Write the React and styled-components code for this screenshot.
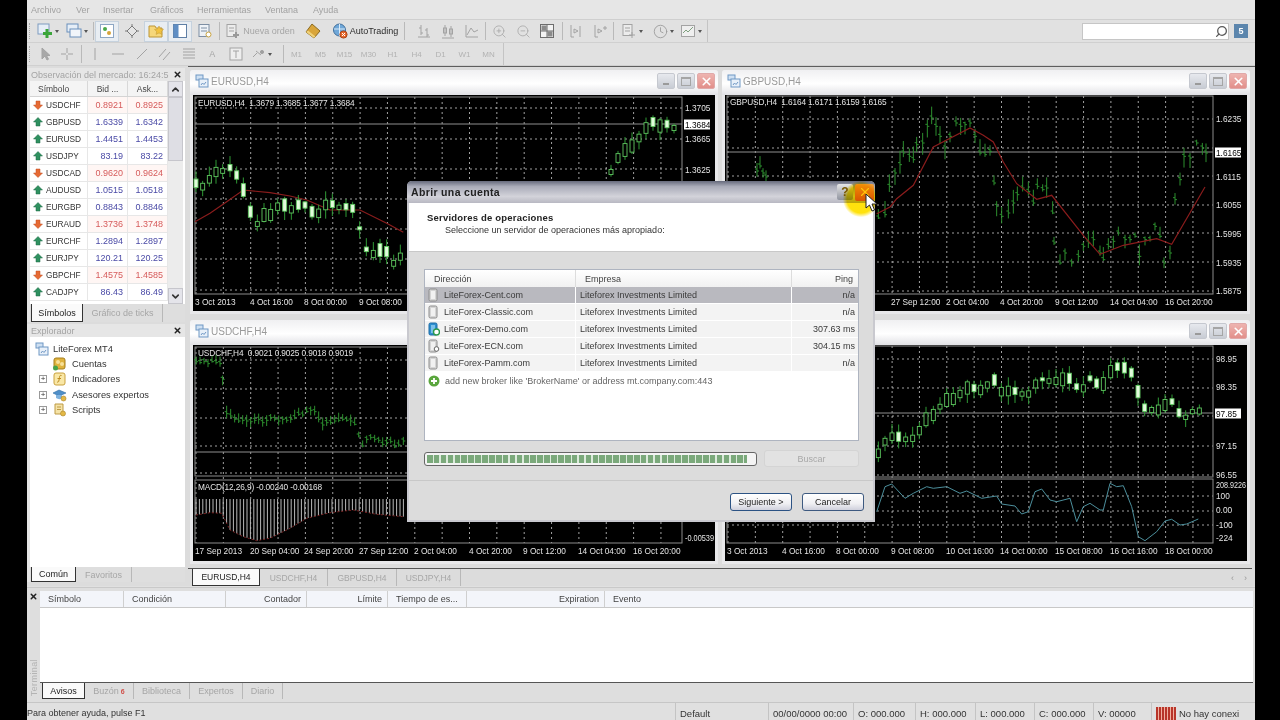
import React from "react";
import styled, { createGlobalStyle } from "styled-components";
import { Search, ZoomIn, ZoomOut, Clock, ChevronUp, ChevronDown, X } from "lucide-react";

const FONT = `"Liberation Sans", Arial, sans-serif`;

// little pseudo random so the candles stay the same on each render
const noise = (i) => {
  const n = Math.sin(i * 12.9898) * 43758.5453;
  return n - Math.floor(n);
};
const fromZoom = (ox, oy, pts) => pts.map(([x, y]) => [ox + x / 3, oy + y / 3]);
const toLine = (pts) => pts.map(([x, y]) => `${x.toFixed(1)},${y.toFixed(1)}`).join(" ");

const EUR_CANDLES = [
  ...fromZoom(190, 70, [[18,340],[38,350],[58,328],[78,306],[98,303],[120,293],[140,315],[160,360],[181,425],[202,462],[222,435],[242,435],[263,410],[284,405],[304,418],[325,404],[345,405],[366,425],[386,430],[407,405],[427,402],[447,412],[468,410],[488,415],[509,475],[529,538],[550,552],[570,540],[590,545],[611,580],[631,560]]),
  [611,172],[618,158],[625,150],[632,146],[639,138],[646,128],[653,122],[660,126],[667,124],[674,128],
];
const EUR_MA = fromZoom(190, 70, [[15,455],[60,430],[110,395],[160,360],[240,368],[300,378],[350,390],[420,420],[510,420],[590,460],[640,487]]);

const GBP_BARS = [
  [757,170],[760,165],[763,172],[766,176],
  ...fromZoom(870, 92, [[25,375],[45,365],[58,280],[75,240],[90,215],[100,180],[118,190],[130,200],[140,155],[158,150],[172,100],[185,75],[198,100],[210,130],[225,165],[240,130],[258,90],[272,100],[285,95],[300,90],[315,130],[330,180],[345,185],[360,175],[372,270],[380,340],[395,370],[415,360],[430,330],[442,305],[458,285],[475,295],[490,330],[502,280],[518,290],[530,285],[548,360],[552,450],[570,510],[585,480],[605,510],[625,490],[640,460],[655,450],[670,440],[690,480],[700,500],[715,460],[730,445],[745,420],[765,440],[780,440],[795,430],[808,490],[825,440],[840,440],[855,400],[870,430],[882,510],[900,480],[915,320],[930,260],[942,190],[960,195],[980,150],[997,165],[1008,180]]),
];
const GBP_MA = fromZoom(870, 92, [[20,365],[60,345],[80,320],[130,280],[190,165],[300,108],[340,130],[370,150],[400,210],[440,275],[500,322],[545,310],[640,430],[690,487],[760,460],[860,440],[905,457],[1005,285]]);

const CHF_BARS = fromZoom(190, 320, [[18,122],[30,125],[42,122],[54,128],[66,122],[78,125],[90,128],[98,175],[110,278],[122,285],[134,295],[146,300],[158,298],[170,300],[182,302],[194,298],[206,295],[218,305],[230,298],[242,290],[254,295],[266,300],[278,295],[290,298],[302,295],[314,290],[326,280],[338,282],[350,272],[362,268],[374,272],[386,295],[398,312],[410,305],[422,305],[434,300],[446,298],[458,295],[470,298],[482,300],[494,310],[506,345],[518,375],[530,355],[542,350],[554,355],[566,358],[578,370],[590,365],[602,362],[614,378],[626,372],[640,360]]);
const MACD_LOW = [[18,585],[60,578],[95,580],[120,630],[160,650],[200,662],[240,655],[300,625],[350,595],[420,578],[490,570],[560,583],[640,590]];

const JPY_CANDLES = fromZoom(870, 320, [[25,400],[45,365],[66,350],[86,350],[107,358],[128,355],[148,332],[168,298],[190,285],[210,260],[230,240],[250,237],[270,222],[292,204],[312,204],[332,210],[352,195],[373,180],[394,215],[415,213],[435,213],[456,222],[476,222],[497,192],[517,178],[537,183],[558,183],[578,178],[598,175],[620,200],[640,205],[660,175],[680,190],[700,192],[722,155],[742,140],[763,143],[784,158],[804,215],[824,263],[845,270],[865,270],[885,255],[906,245],[927,278],[947,292],[967,275],[988,273]]);
const JPY_CCI = fromZoom(870, 320, [[20,575],[45,500],[65,492],[105,535],[130,520],[170,500],[190,505],[230,500],[270,520],[290,513],[335,535],[380,528],[395,552],[435,558],[455,582],[475,575],[495,515],[515,507],[540,540],[560,545],[600,535],[620,605],[640,560],[660,550],[690,570],[700,570],[720,490],[740,500],[760,497],[785,560],[805,650],[825,662],[860,635],[885,603],[905,598],[930,615],[950,612],[985,597]]);

const Candles = ({ pts }) => (
  <g>
    {pts.map(([x, y], i) => {
      const next = pts[i + 1] ? pts[i + 1][1] : y;
      const falling = next > y;
      const half = 1.5 + noise(i + 3) * 5;
      const up = half + 1 + noise(i + 11) * 8;
      const down = half + 1 + noise(i + 17) * 8;
      return (
        <g key={i}>
          <line x1={x} x2={x} y1={y - up} y2={y + down} stroke="#2f9a35" />
          <rect
            x={x - 2}
            y={y - half}
            width={4}
            height={half * 2}
            fill={falling ? "#e2fbdc" : "#000"}
            stroke="#5fc860"
            strokeWidth="0.9"
          />
        </g>
      );
    })}
  </g>
);

const Bars = ({ pts, spread }) => (
  <g stroke="#2c8f2e" strokeWidth="1">
    {pts.map(([x, y], i) => {
      const up = 2 + noise(i + 5) * spread;
      const down = 2 + noise(i + 23) * spread;
      return (
        <g key={i}>
          <line x1={x} x2={x} y1={y - up} y2={y + down} />
          <line x1={x - 2} x2={x} y1={y - 1} y2={y - 1} />
          <line x1={x} x2={x + 2} y1={y + 1} y2={y + 1} />
        </g>
      );
    })}
  </g>
);

const Macd = () => {
  const low = fromZoom(190, 320, MACD_LOW);
  const at = (x) => {
    for (let i = 1; i < low.length; i++) {
      if (x <= low[i][0]) {
        const t = (x - low[i - 1][0]) / (low[i][0] - low[i - 1][0]);
        return low[i - 1][1] + (low[i][1] - low[i - 1][1]) * t;
      }
    }
    return low[low.length - 1][1];
  };
  const bars = [];
  for (let x = 196; x < 406; x += 3.4) bars.push(x);
  return (
    <g>
      {bars.map((x) => (
        <line key={x} x1={x} x2={x} y1={499} y2={at(x)} stroke="#b9b9b9" strokeWidth="1" />
      ))}
      <polyline points={toLine(low)} fill="none" stroke="#7a1f1f" strokeDasharray="2 2" />
    </g>
  );
};

const Plot = ({ ox, oy, left, right, top, bottom, subTop, subBottom, hGrid, price, priceLabel, axis, times, info, subInfo, children }) => {
  const verticals = [];
  const end = subBottom || bottom;
  for (let x = left + 1; x < right - 2; x += 27.35) verticals.push(x);
  return (
    <ChartSvg viewBox="0 0 522 216">
      <g transform={`translate(${-ox} ${-oy})`}>
        <g stroke="#c9c9c9" strokeDasharray="2 3" strokeWidth="0.8">
          {verticals.map((x) => (
            <line key={x} x1={x} x2={x} y1={top} y2={end} />
          ))}
          {hGrid.map((y) => (
            <line key={y} x1={left} x2={right} y1={y} y2={y} />
          ))}
        </g>
        <rect x={left} y={top} width={right - left} height={bottom - top} fill="none" stroke="#8c8c8c" />
        {subTop && <rect x={left} y={subTop} width={right - left} height={subBottom - subTop} fill="none" stroke="#8c8c8c" />}
        {price && <line x1={left} x2={right} y1={price} y2={price} stroke="#8f8f8f" />}
        {children}
        {info && <InfoText x={left + 3} y={top + 9}>{info}</InfoText>}
        {subInfo && <InfoText x={left + 3} y={subTop + 10}>{subInfo}</InfoText>}
        {axis.map(([label, y, fit]) => (
          <AxisText key={label} x={right + 3} y={y + 3} textLength={fit} lengthAdjust={fit ? "spacingAndGlyphs" : undefined}>
            {label}
          </AxisText>
        ))}
        {priceLabel && (
          <g>
            <rect x={right + 2} y={price - 4.5} width={26} height={10} fill="#fff" />
            <AxisText x={right + 3} y={price + 3.5} fill="#000">{priceLabel}</AxisText>
          </g>
        )}
        {times.map(([label, x]) => (
          <AxisText key={label} x={x} y={end + 11}>{label}</AxisText>
        ))}
      </g>
    </ChartSvg>
  );
};

const WinIcon = () => (
  <svg width="14" height="14" viewBox="0 0 14 14">
    <rect x="1" y="1" width="7" height="5" fill="#cfe0f2" stroke="#6f97c4" />
    <rect x="4" y="5" width="9" height="8" fill="#e8f0f9" stroke="#6f97c4" />
    <path d="M6 11l1.5-2 1.5 1.5 2-2.5" fill="none" stroke="#6f97c4" />
  </svg>
);

const ChartWindow = ({ title, children }) => (
  <Win>
    <WinTitle>
      <WinIcon />
      <WinName>{title}</WinName>
      <WinBtn><MinMark /></WinBtn>
      <WinBtn><MaxMark /></WinBtn>
      <WinBtn $close><X size={13} strokeWidth={3} color="#fff" /></WinBtn>
    </WinTitle>
    {children}
  </Win>
);

const Mono = ({ children, w = 16 }) => (
  <svg width={w} height="16" viewBox="0 0 16 16" fill="none" stroke="#a3a3a3" strokeWidth="1">{children}</svg>
);

const Arrow = ({ up }) => (
  <svg width="10" height="10" viewBox="0 0 10 10">
    <path
      d={up ? "M5 .5L9.5 5H7v4H3V5H.5z" : "M5 9.5L9.5 5H7V1H3v4H.5z"}
      fill={up ? "#2f9160" : "#e66a33"}
      stroke={up ? "#1f6b46" : "#c04f20"}
      strokeWidth=".5"
    />
  </svg>
);

const MARKET = [
  ["USDCHF", "0.8921", "0.8925", false],
  ["GBPUSD", "1.6339", "1.6342", true],
  ["EURUSD", "1.4451", "1.4453", true],
  ["USDJPY", "83.19", "83.22", true],
  ["USDCAD", "0.9620", "0.9624", false],
  ["AUDUSD", "1.0515", "1.0518", true],
  ["EURGBP", "0.8843", "0.8846", true],
  ["EURAUD", "1.3736", "1.3748", false],
  ["EURCHF", "1.2894", "1.2897", true],
  ["EURJPY", "120.21", "120.25", true],
  ["GBPCHF", "1.4575", "1.4585", false],
  ["CADJPY", "86.43", "86.49", true],
];

const SERVERS = [
  ["LiteForex-Cent.com", "n/a", "plain"],
  ["LiteForex-Classic.com", "n/a", "plain"],
  ["LiteForex-Demo.com", "307.63 ms", "live"],
  ["LiteForex-ECN.com", "304.15 ms", "search"],
  ["LiteForex-Pamm.com", "n/a", "plain"],
];

const ServerIcon = ({ kind }) => (
  <svg width="12" height="14" viewBox="0 0 12 14">
    <rect x="1" y="1" width="8" height="12" rx="1.5" fill={kind === "live" ? "#2d8fd0" : "#d5d5d5"} stroke={kind === "live" ? "#1c6aa3" : "#8c8c8c"} />
    <rect x="3" y="3" width="4" height="8" fill={kind === "live" ? "#7cc0ea" : "#f1f1f1"} />
    {kind === "live" && <circle cx="8.5" cy="10" r="3" fill="#fff" stroke="#2c9a4b" strokeWidth="1.4" />}
    {kind === "search" && <circle cx="8.5" cy="10" r="2.3" fill="#fff" stroke="#666" />}
  </svg>
);

const App = () => (
  <Screen>
    <GlobalStyle />
    <Frame>
      <MenuBar>
        <MenuItem $w={45}>Archivo</MenuItem>
        <MenuItem $w={27}>Ver</MenuItem>
        <MenuItem $w={47}>Insertar</MenuItem>
        <MenuItem $w={47}>Gráficos</MenuItem>
        <MenuItem $w={68}>Herramientas</MenuItem>
        <MenuItem $w={48}>Ventana</MenuItem>
        <MenuItem>Ayuda</MenuItem>
      </MenuBar>

      <ToolRow>
        <ToolGroup>
          <Grip />
          <ToolBtn $w={27}>
            <svg width="16" height="16" viewBox="0 0 16 16">
              <rect x="1" y="1" width="11" height="10" fill="#e6eef7" stroke="#7e9cc0" />
              <path d="M10 6v9M6 10.5h9" stroke="#3aa53a" strokeWidth="3" />
            </svg>
            <CaretMark />
          </ToolBtn>
          <ToolBtn $w={31}>
            <svg width="16" height="16" viewBox="0 0 16 16">
              <rect x="1" y="1" width="11" height="8" fill="#e6eef7" stroke="#6a8fbb" />
              <rect x="4" y="6" width="11" height="8" fill="#f1f5fa" stroke="#6a8fbb" />
            </svg>
            <CaretMark />
          </ToolBtn>
          <Sep />
          <ToolBtn $w={24} $on>
            <svg width="16" height="16" viewBox="0 0 16 16">
              <rect x="1.5" y="1.5" width="13" height="13" fill="#fff" stroke="#8ea7c4" />
              <circle cx="6" cy="6" r="2" fill="#4aa84a" />
              <circle cx="10" cy="10" r="2" fill="#d6a43a" />
            </svg>
          </ToolBtn>
          <ToolBtn $w={25}>
            <svg width="16" height="16" viewBox="0 0 16 16" fill="none" stroke="#7a7a7a">
              <path d="M8 1v14M1 8h14" />
              <path d="M8 3l5 5-5 5-5-5z" fill="#e5e5e5" />
            </svg>
          </ToolBtn>
          <ToolBtn $w={24} $on>
            <svg width="17" height="16" viewBox="0 0 17 16">
              <path d="M1 3h6l1 2h6v9H1z" fill="#f6d77a" stroke="#bd9636" />
              <path d="M11 3l1.5 3 3 .4-2.2 2 .6 3-2.9-1.5-2.9 1.5.6-3-2.2-2 3-.4z" fill="#f2c23e" stroke="#bd9636" strokeWidth=".5" />
            </svg>
          </ToolBtn>
          <ToolBtn $w={24} $on>
            <svg width="16" height="16" viewBox="0 0 16 16">
              <rect x="1.5" y="1.5" width="13" height="13" fill="#fff" stroke="#5f7fa5" />
              <rect x="1.5" y="1.5" width="5" height="13" fill="#5f8ec4" />
            </svg>
          </ToolBtn>
          <ToolBtn $w={26}>
            <svg width="16" height="16" viewBox="0 0 16 16" fill="none">
              <rect x="2" y="1.5" width="10" height="12" fill="#eef2f7" stroke="#7d8ea3" />
              <path d="M4 5h6M4 8h6" stroke="#7d8ea3" />
              <circle cx="11.5" cy="11.5" r="2.5" fill="#fff" stroke="#c9a33e" />
            </svg>
          </ToolBtn>
          <Sep />
          <ToolBtn $w={78} $gap={2}>
            <Mono>
              <rect x="2" y="1.5" width="9" height="12" fill="#ececec" />
              <path d="M4 5h5M4 8h5" />
              <path d="M11 9v6M8 12h6" stroke="#999" strokeWidth="2" />
            </Mono>
            <FadedLabel>Nueva orden</FadedLabel>
          </ToolBtn>
          <ToolBtn $w={28}>
            <svg width="18" height="16" viewBox="0 0 18 16">
              <path d="M8 1l8 7-6 7-8-6z" fill="#d9a53a" stroke="#8a6a20" />
              <path d="M2 9l8 6 1.5-1.6L4 7.4z" fill="#f0d27a" />
            </svg>
          </ToolBtn>
          <ToolBtn $w={76} $gap={2}>
            <svg width="16" height="16" viewBox="0 0 16 16">
              <circle cx="7.5" cy="7" r="6" fill="#6fa7d8" stroke="#416f9c" />
              <path d="M2 6h11M7.5 1v12" stroke="#dcebf7" />
              <circle cx="11.5" cy="11.5" r="3.6" fill="#e7682c" stroke="#a8431a" />
              <path d="M10 13l3-3M10 10l3 3" stroke="#fff" />
            </svg>
            <ToolLabel>AutoTrading</ToolLabel>
          </ToolBtn>
          <Sep />
          <SepGap $w={6} />
          <ToolBtn $w={24}><Mono><path d="M5 2v10M3 5h2M5 10h2M11 5v9M9 7h2M11 12h2M2 14h12" /></Mono></ToolBtn>
          <ToolBtn $w={24}><Mono><path d="M5 2v11M11 3v11M2 15h12" /><rect x="3.5" y="5" width="3" height="5" /><rect x="9.5" y="6" width="3" height="5" /></Mono></ToolBtn>
          <ToolBtn $w={24}><Mono><path d="M2 2v12h12M3 12l4-7 3 4 4-2" /></Mono></ToolBtn>
          <Sep />
          <ToolBtn $w={24}><ZoomIn size={15} color="#a8a8a8" strokeWidth={1.3} /></ToolBtn>
          <ToolBtn $w={24}><ZoomOut size={15} color="#a8a8a8" strokeWidth={1.3} /></ToolBtn>
          <ToolBtn $w={24}>
            <svg width="16" height="16" viewBox="0 0 16 16">
              <rect x="1.5" y="1.5" width="13" height="13" fill="#f3f3f3" stroke="#6d6d6d" />
              <rect x="2.5" y="2.5" width="5" height="5" fill="#8b8b8b" />
              <rect x="8.5" y="8.5" width="5" height="5" fill="#8b8b8b" />
              <path d="M8 1v14M1 8h14" stroke="#6d6d6d" />
            </svg>
          </ToolBtn>
          <SepGap $w={2} />
          <Sep />
          <ToolBtn $w={24}><Mono><path d="M3 2v12h3M6 6l4 2-4 2zM12 3v11" /></Mono></ToolBtn>
          <ToolBtn $w={24}><Mono><path d="M3 2v12h3M6 6l4 2-4 2zM13 3v4M11 5h4" /></Mono></ToolBtn>
          <Sep />
          <ToolBtn $w={34}>
            <Mono>
              <rect x="2" y="1.5" width="9" height="11" fill="#ececec" />
              <path d="M4 5h5M4 8h5M11 9v6M8 12h6" />
            </Mono>
            <CaretMark />
          </ToolBtn>
          <ToolBtn $w={28}><Clock size={15} color="#9a9a9a" strokeWidth={1.4} /><CaretMark /></ToolBtn>
          <ToolBtn $w={28}>
            <Mono>
              <rect x="1.5" y="2.5" width="13" height="11" fill="#efefef" />
              <path d="M3 10l3-3 2 2 5-5" stroke="#7fa07f" />
            </Mono>
            <CaretMark />
          </ToolBtn>
        </ToolGroup>
        <SearchBox>
          <Search size={13} color="#5a5a5a" strokeWidth={2.4} style={{ transform: "scaleX(-1)" }} />
        </SearchBox>
        <Bubble>5</Bubble>
      </ToolRow>

      <ToolRow>
        <ToolGroup>
          <Grip />
          <ToolBtn $w={20}><Mono><path d="M6 2v11l3-3 2 4 1.5-.8-2-3.7h3.5z" fill="#a8a8a8" /></Mono></ToolBtn>
          <ToolBtn $w={26}><Mono><path d="M8 2v5M8 9v5M2 8h5M9 8h5" /></Mono></ToolBtn>
          <Sep />
          <ToolBtn $w={23.5}><Mono><path d="M8 2v12" /></Mono></ToolBtn>
          <ToolBtn $w={23.5}><Mono><path d="M2 8h12" /></Mono></ToolBtn>
          <ToolBtn $w={23.5}><Mono><path d="M3 13L13 3" /></Mono></ToolBtn>
          <ToolBtn $w={23.5}><Mono><path d="M2 11l7-8M6 14l7-8" /></Mono></ToolBtn>
          <ToolBtn $w={23.5}><Mono><path d="M2 3h12M2 6h12M2 9h12M2 12h12" /></Mono></ToolBtn>
          <ToolBtn $w={23.5}><FadedLabel>A</FadedLabel></ToolBtn>
          <ToolBtn $w={23.5}><Mono><rect x="2" y="2" width="12" height="12" fill="#eee" /><path d="M5 5h6M8 5v7" /></Mono></ToolBtn>
          <ToolBtn $w={26}>
            <Mono><path d="M3 11l4-4M6 5l5 4" /><circle cx="12" cy="6" r="1.6" fill="#a0a0a0" /></Mono>
            <CaretMark />
          </ToolBtn>
          <SepGap $w={8} />
          <Sep />
          <Period>M1</Period>
          <Period>M5</Period>
          <Period>M15</Period>
          <Period>M30</Period>
          <Period>H1</Period>
          <Period>H4</Period>
          <Period>D1</Period>
          <Period>W1</Period>
          <Period>MN</Period>
        </ToolGroup>
      </ToolRow>

      <Workspace>
        <SideColumn>
          <Panel $h={254}>
            <PanelTitle>
              <TitleClip>Observación del mercado: 16:24:5</TitleClip>
              <X size={9} strokeWidth={4} color="#222" />
            </PanelTitle>
            <MarketBody>
              <MarketTable>
                <MarketHead>
                  <HeadCell>Símbolo</HeadCell>
                  <HeadCell $center>Bid ...</HeadCell>
                  <HeadCell $center>Ask...</HeadCell>
                </MarketHead>
                {MARKET.map(([sym, bid, ask, up]) => (
                  <MarketRow key={sym}>
                    <SymbolCell><Arrow up={up} />{sym}</SymbolCell>
                    <PriceCell $up={up}>{bid}</PriceCell>
                    <PriceCell $up={up}>{ask}</PriceCell>
                  </MarketRow>
                ))}
              </MarketTable>
              <ScrollBar>
                <ScrollArrow><ChevronUp size={11} strokeWidth={3.5} color="#333" /></ScrollArrow>
                <ScrollThumb />
                <ScrollArrow><ChevronDown size={11} strokeWidth={3.5} color="#333" /></ScrollArrow>
              </ScrollBar>
            </MarketBody>
            <TabStrip>
              <Tab $active $w={52}>Símbolos</Tab>
              <Tab $w={80}>Gráfico de ticks</Tab>
            </TabStrip>
          </Panel>
          <Panel $grow>
            <PanelTitle>
              <TitleClip>Explorador</TitleClip>
              <X size={9} strokeWidth={4} color="#222" />
            </PanelTitle>
            <Tree>
              <TreeRow>
                <WinIcon />
                <span>LiteForex MT4</span>
              </TreeRow>
              <TreeRow $indent>
                <svg width="15" height="14" viewBox="0 0 15 14">
                  <rect x="2" y="1" width="11" height="11" rx="2" fill="#e0b33d" stroke="#a57f1e" />
                  <circle cx="6" cy="5" r="2" fill="#f7e19a" />
                  <circle cx="10" cy="7" r="2" fill="#f7e19a" />
                  <circle cx="3.5" cy="11" r="2.5" fill="#48a348" />
                </svg>
                <span>Cuentas</span>
              </TreeRow>
              <TreeRow $indent $plus>
                <PlusBox>+</PlusBox>
                <svg width="15" height="14" viewBox="0 0 15 14">
                  <rect x="2" y="1" width="11" height="12" rx="2" fill="#f9e7a6" stroke="#c9a13e" />
                  <path d="M9.5 3.5c-1.5-.5-2 .5-2 2l-.7 3.5c-.2 1-.8 1.3-1.8 1M5.5 6.5h3.5" fill="none" stroke="#bb8a1e" />
                </svg>
                <span>Indicadores</span>
              </TreeRow>
              <TreeRow $indent $plus>
                <PlusBox>+</PlusBox>
                <svg width="15" height="14" viewBox="0 0 15 14">
                  <path d="M1 5l6-3 7 3-7 3z" fill="#4f8fc9" stroke="#2f6ba3" strokeWidth=".6" />
                  <path d="M4 7v3c2 1.5 5 1.5 6 0V7" fill="#7fb2de" />
                  <circle cx="11.5" cy="10.5" r="2.5" fill="#e3b845" stroke="#a9842a" strokeWidth=".6" />
                </svg>
                <span>Asesores expertos</span>
              </TreeRow>
              <TreeRow $indent $plus>
                <PlusBox>+</PlusBox>
                <svg width="15" height="14" viewBox="0 0 15 14">
                  <path d="M3 1h8v10H3z" fill="#f5e3a7" stroke="#bd9a45" />
                  <path d="M5 4h4M5 6.5h4" stroke="#bd9a45" />
                  <circle cx="11" cy="10.5" r="2.5" fill="#e3b845" stroke="#a9842a" strokeWidth=".6" />
                </svg>
                <span>Scripts</span>
              </TreeRow>
            </Tree>
            <TabStrip $h={15}>
              <Tab $active $w={45}>Común</Tab>
              <Tab $w={56}>Favoritos</Tab>
            </TabStrip>
          </Panel>
        </SideColumn>

        <ChartColumn>
          <Mdi>
            <ChartWindow title="EURUSD,H4">
              <Plot
                ox={193} oy={95} left={195} right={682} top={97} bottom={294}
                hGrid={[108, 139, 169, 199, 229, 259, 290]} price={124} priceLabel="1.3684"
                axis={[["1.3705", 108], ["1.3665", 139], ["1.3625", 170]]}
                info="EURUSD,H4  1.3679 1.3685 1.3677 1.3684"
                times={[["3 Oct 2013", 195], ["4 Oct 16:00", 250], ["8 Oct 00:00", 304], ["9 Oct 08:00", 359]]}
              >
                <polyline points={toLine(EUR_MA)} fill="none" stroke="#8a1c1c" strokeWidth="1.2" />
                <Candles pts={EUR_CANDLES} />
              </Plot>
            </ChartWindow>
            <ChartWindow title="GBPUSD,H4">
              <Plot
                ox={725} oy={95} left={727} right={1213} top={96} bottom={294}
                hGrid={[119, 148, 176, 205, 233, 262, 291]} price={152} priceLabel="1.6165"
                axis={[["1.6235", 119], ["1.6115", 177], ["1.6055", 205], ["1.5995", 234], ["1.5935", 263], ["1.5875", 291]]}
                info="GBPUSD,H4  1.6164 1.6171 1.6159 1.6165"
                times={[["27 Sep 12:00", 891], ["2 Oct 04:00", 946], ["4 Oct 20:00", 1000], ["9 Oct 12:00", 1055], ["14 Oct 04:00", 1110], ["16 Oct 20:00", 1165]]}
              >
                <Bars pts={GBP_BARS} spread={11} />
                <polyline points={toLine(GBP_MA)} fill="none" stroke="#8a1c1c" strokeWidth="1.2" />
              </Plot>
            </ChartWindow>
            <ChartWindow title="USDCHF,H4">
              <Plot
                ox={193} oy={345} left={195} right={682} top={347} bottom={476} subTop={480} subBottom={543}
                hGrid={[360, 389, 418, 446, 473]} price={452}
                axis={[["-0.00539", 538, 29]]}
                info="USDCHF,H4  0.9021 0.9025 0.9018 0.9019"
                subInfo="MACD(12,26,9) -0.00240 -0.00168"
                times={[["17 Sep 2013", 195], ["20 Sep 04:00", 250], ["24 Sep 20:00", 304], ["27 Sep 12:00", 359], ["2 Oct 04:00", 414], ["4 Oct 20:00", 469], ["9 Oct 12:00", 523], ["14 Oct 04:00", 578], ["16 Oct 20:00", 633]]}
              >
                <Bars pts={CHF_BARS} spread={5} />
                <Macd />
              </Plot>
            </ChartWindow>
            <ChartWindow title="USDJPY,H4">
              <Plot
                ox={725} oy={345} left={727} right={1213} top={346} bottom={477} subTop={479} subBottom={543}
                hGrid={[359, 388, 416, 446, 475, 496, 511, 525]} price={413} priceLabel="97.85"
                axis={[["98.95", 359], ["98.35", 387], ["97.15", 446], ["96.55", 475], ["208.9226", 485, 30], ["100", 496], ["0.00", 510], ["-100", 525], ["-224", 538]]}
                times={[["3 Oct 2013", 727], ["4 Oct 16:00", 782], ["8 Oct 00:00", 836], ["9 Oct 08:00", 891], ["10 Oct 16:00", 946], ["14 Oct 00:00", 1000], ["15 Oct 08:00", 1055], ["16 Oct 16:00", 1110], ["18 Oct 00:00", 1165]]}
              >
                <Candles pts={JPY_CANDLES} />
                <polyline points={toLine(JPY_CCI)} fill="none" stroke="#4c8f9c" strokeWidth="1" />
              </Plot>
            </ChartWindow>
          </Mdi>
          <ChartTabs>
            <Tab $active $w={68} $big>EURUSD,H4</Tab>
            <Tab $w={68} $big>USDCHF,H4</Tab>
            <Tab $w={69} $big>GBPUSD,H4</Tab>
            <Tab $w={64} $big>USDJPY,H4</Tab>
            <PagerArrows>‹&nbsp;&nbsp;&nbsp;&nbsp;›</PagerArrows>
          </ChartTabs>
        </ChartColumn>
      </Workspace>

      <Terminal>
        <TerminalSide>
          <X size={9} strokeWidth={4} color="#222" />
          <VerticalLabel>Terminal</VerticalLabel>
        </TerminalSide>
        <TerminalMain>
          <TerminalHead>
            <Col $w={84}>Símbolo</Col>
            <Col $w={102}>Condición</Col>
            <Col $w={81} $right>Contador</Col>
            <Col $w={81} $right>Límite</Col>
            <Col $w={79}>Tiempo de es...</Col>
            <Col $w={138} $right>Expiration</Col>
            <Col $w={620} $last>Evento</Col>
          </TerminalHead>
          <TerminalBody />
          <TerminalTabs>
            <Tab $active $w={43}>Avisos</Tab>
            <Tab $w={49}>Buzón<Badge>6</Badge></Tab>
            <Tab $w={56}>Biblioteca</Tab>
            <Tab $w={53}>Expertos</Tab>
            <Tab $w={40}>Diario</Tab>
          </TerminalTabs>
        </TerminalMain>
      </Terminal>

      <StatusBar>
        <StatusCell $w={648} $small>Para obtener ayuda, pulse F1</StatusCell>
        <StatusCell $w={93} $line>Default</StatusCell>
        <StatusCell $w={85} $line>00/00/0000 00:00</StatusCell>
        <StatusCell $w={62} $line>O: 000.000</StatusCell>
        <StatusCell $w={60} $line>H: 000.000</StatusCell>
        <StatusCell $w={59} $line>L: 000.000</StatusCell>
        <StatusCell $w={59} $line>C: 000.000</StatusCell>
        <StatusCell $w={58} $line>V: 00000</StatusCell>
        <StatusCell $line $gap>
          <NoConnection />
          No hay conexi
        </StatusCell>
      </StatusBar>

      <Dialog>
        <DialogTitle>
          <DialogName>Abrir una cuenta</DialogName>
          <HelpBtn>?</HelpBtn>
          <CloseBtn>
            <X size={14} strokeWidth={2} color="#ffe0a8" />
          </CloseBtn>
          <CursorGlow />
          <Cursor width="13" height="19" viewBox="0 0 13 19">
            <path d="M1 1v14l3.5-3 2.5 6 2.5-1-2.5-6h5z" fill="#fff" stroke="#222" />
          </Cursor>
        </DialogTitle>
        <DialogHeader>
          <HeaderTitle>Servidores de operaciones</HeaderTitle>
          <HeaderSub>Seleccione un servidor de operaciones más apropiado:</HeaderSub>
        </DialogHeader>
        <DialogBody>
          <ListBox>
            <ListHead>
              <ListHeadCell $pad={9}>Dirección</ListHeadCell>
              <ListHeadCell $pad={9}>Empresa</ListHeadCell>
              <ListHeadCell $right>Ping</ListHeadCell>
            </ListHead>
            {SERVERS.map(([name, ping, kind], i) => (
              <ListRow key={name} $selected={i === 0}>
                <ListCell $gap>
                  <ServerIcon kind={kind} />
                  {name}
                </ListCell>
                <ListCell $pad={4}>Liteforex Investments Limited</ListCell>
                <ListCell $right>{ping}</ListCell>
              </ListRow>
            ))}
            <AddRow>
              <svg width="12" height="12" viewBox="0 0 12 12">
                <circle cx="6" cy="6" r="5.5" fill="#5aa63d" />
                <path d="M6 3v6M3 6h6" stroke="#fff" strokeWidth="1.8" />
              </svg>
              add new broker like 'BrokerName' or address mt.company.com:443
            </AddRow>
          </ListBox>
          <SearchRow>
            <Progress />
            <DisabledBtn>Buscar</DisabledBtn>
          </SearchRow>
        </DialogBody>
        <DialogFooter>
          <DialogBtn $default>Siguiente &gt;</DialogBtn>
          <DialogBtn>Cancelar</DialogBtn>
        </DialogFooter>
      </Dialog>
    </Frame>
  </Screen>
);

export default App;

const GlobalStyle = createGlobalStyle`
  html, body {
    margin: 0;
    padding: 0;
    background: #000;
  }
  * {
    box-sizing: border-box;
  }
`;

const Screen = styled.div`
  width: 1280px;
  height: 720px;
  background: #000;
  padding-left: 27px;
  overflow: hidden;
  font-family: ${FONT};
  font-size: 9px;
  color: #333;
`;

const Frame = styled.div`
  position: relative;
  width: 1228px;
  height: 720px;
  background: #e0e0e0;
  display: flex;
  flex-direction: column;
  filter: blur(0.3px);
`;

const MenuBar = styled.div`
  height: 20px;
  display: flex;
  align-items: center;
  padding-left: 4px;
  background: #e6e6e6;
  border-bottom: 1px solid #cfcfcf;
  color: #a2a2a2;
`;

const MenuItem = styled.span`
  width: ${(p) => (p.$w ? `${p.$w}px` : "auto")};
`;

const ToolRow = styled.div`
  height: 23px;
  display: flex;
  align-items: center;
  background: #e1e1e1;
  border-bottom: 1px solid #d0d0d0;
`;

const ToolGroup = styled.div`
  height: 22px;
  display: flex;
  align-items: center;
  border-right: 1px solid #c4c4c4;
  padding-right: 2px;
`;

const Grip = styled.div`
  width: 5px;
  height: 16px;
  border-left: 1px dotted #aaa;
  margin-left: 2px;
`;

const ToolBtn = styled.div`
  width: ${(p) => p.$w}px;
  height: 21px;
  display: flex;
  align-items: center;
  justify-content: center;
  gap: ${(p) => p.$gap ?? 1}px;
  flex: none;
  background: ${(p) => (p.$on ? "#e8edf2" : "transparent")};
  outline: ${(p) => (p.$on ? "1px solid #c6d2de" : "none")};
  outline-offset: -1px;
`;

const CaretMark = styled.i`
  width: 0;
  height: 0;
  border: 2px solid transparent;
  border-top: 3px solid #555;
  border-bottom: 0;
  margin-left: 1px;
`;

const FadedLabel = styled.span`
  color: #a6a6a6;
  white-space: nowrap;
`;

const ToolLabel = styled.span`
  color: #2c2c2c;
  white-space: nowrap;
`;

const Sep = styled.div`
  width: 1px;
  height: 18px;
  flex: none;
  background: #b9b9b9;
  margin: 0 1px;
`;

const SepGap = styled.div`
  width: ${(p) => p.$w}px;
  flex: none;
`;

const Period = styled.span`
  width: 24px;
  flex: none;
  text-align: center;
  font-size: 8px;
  color: #b2b2b2;
`;

const SearchBox = styled.div`
  width: 147px;
  height: 17px;
  margin-left: auto;
  background: #fff;
  border: 1px solid #c6c6c6;
  display: flex;
  align-items: center;
  justify-content: flex-end;
`;

const Bubble = styled.div`
  width: 14px;
  height: 14px;
  margin: 0 7px 0 5px;
  background: #5c86ad;
  color: #fff;
  font-weight: bold;
  font-size: 9px;
  text-align: center;
  line-height: 14px;
`;

const Workspace = styled.div`
  flex: none;
  height: 520px;
  display: flex;
  background: #dcdcdc;
`;

const SideColumn = styled.div`
  width: 158px;
  flex: none;
  display: flex;
  flex-direction: column;
  gap: 2px;
  padding: 2px 0 4px;
`;

const ChartColumn = styled.div`
  flex: 1;
  display: flex;
  flex-direction: column;
  padding-left: 3px;
  min-width: 0;
`;

const Panel = styled.div`
  height: ${(p) => (p.$h ? `${p.$h}px` : "auto")};
  flex: ${(p) => (p.$grow ? 1 : "none")};
  min-height: 0;
  display: flex;
  flex-direction: column;
  background: #e6e6e6;
  padding-left: 3px;
`;

const PanelTitle = styled.div`
  height: 13px;
  flex: none;
  display: flex;
  align-items: center;
  justify-content: space-between;
  padding: 0 3px 0 1px;
  color: #a4a4a4;
`;

const TitleClip = styled.span`
  width: 142px;
  overflow: hidden;
  white-space: nowrap;
`;

const MarketBody = styled.div`
  flex: 1;
  display: flex;
  min-height: 0;
  background: #fff;
  overflow: hidden;
`;

const MarketTable = styled.div`
  width: 138px;
`;

const MarketHead = styled.div`
  display: grid;
  grid-template-columns: 58px 40px 40px;
  height: 16px;
  background: #f4f4f4;
  border-bottom: 1px solid #d4d4d4;
`;

const HeadCell = styled.div`
  display: flex;
  align-items: center;
  font-size: 8.5px;
  justify-content: ${(p) => (p.$center ? "center" : "flex-start")};
  padding-left: ${(p) => (p.$center ? 0 : 8)}px;
  border-right: 1px solid #d8d8d8;
  color: #444;
`;

const MarketRow = styled.div`
  display: grid;
  grid-template-columns: 58px 40px 40px;
  height: 17px;
  border-bottom: 1px solid #e7e7e7;
`;

const SymbolCell = styled.div`
  display: flex;
  align-items: center;
  gap: 3px;
  padding-left: 3px;
  font-size: 8.3px;
  color: #333;
  border-right: 1px solid #e7e7e7;
`;

const PriceCell = styled.div`
  display: flex;
  align-items: center;
  justify-content: flex-end;
  padding-right: 4px;
  color: ${(p) => (p.$up ? "#4a4aa6" : "#d65b5b")};
  background: ${(p) => (p.$up ? "#fff" : "#fff6f4")};
  border-right: 1px solid #e7e7e7;
`;

const ScrollBar = styled.div`
  width: 15px;
  flex: none;
  display: flex;
  flex-direction: column;
  background: #ececec;
`;

const ScrollArrow = styled.div`
  height: 16px;
  flex: none;
  display: flex;
  align-items: center;
  justify-content: center;
  background: #e4e4ea;
  border: 1px solid #c6c6cc;
`;

const ScrollThumb = styled.div`
  height: 64px;
  background: #dedee4;
  border: 1px solid #c6c6cc;
  margin-bottom: auto;
`;

const TabStrip = styled.div`
  height: ${(p) => p.$h || 18}px;
  flex: none;
  display: flex;
  padding-left: 1px;
  background: #dedede;
`;

const Tab = styled.div`
  width: ${(p) => p.$w}px;
  flex: none;
  display: flex;
  align-items: center;
  justify-content: center;
  white-space: nowrap;
  font-size: ${(p) => (p.$big ? "8.5px" : "inherit")};
  color: ${(p) => (p.$active ? "#222" : "#a6a6a6")};
  background: ${(p) => (p.$active ? "#fafafa" : "transparent")};
  border-left: ${(p) => (p.$active ? "1px solid #333" : "0")};
  border-bottom: ${(p) => (p.$active ? "1px solid #333" : "0")};
  border-right: 1px solid ${(p) => (p.$active ? "#333" : "#b8b8b8")};
`;

const Badge = styled.sub`
  color: #d0504a;
  font-size: 7px;
  font-weight: bold;
  margin-left: 2px;
`;

const Tree = styled.div`
  flex: 1;
  background: #fff;
  padding: 4px 0 0 4px;
  font-size: 9.3px;
  color: #333;
`;

const TreeRow = styled.div`
  height: 15.3px;
  display: flex;
  align-items: center;
  gap: ${(p) => (p.$indent ? 5 : 4)}px;
  padding-left: ${(p) => (p.$plus ? "5px" : p.$indent ? "18px" : "1px")};
`;

const PlusBox = styled.span`
  width: 8px;
  height: 8px;
  border: 1px solid #999;
  font-size: 8px;
  line-height: 6px;
  text-align: center;
  color: #333;
`;

const Mdi = styled.div`
  height: 502px;
  flex: none;
  display: grid;
  grid-template-columns: 528px 528px;
  grid-template-rows: 244px 244px;
  column-gap: 4px;
  row-gap: 6px;
  padding: 3px 0 0 2px;
  border-top: 1px solid #5e5e5e;
`;

const Win = styled.div`
  background: #e8e8ea;
  padding: 0 3px 3px;
  border-radius: 3px 3px 0 0;
  overflow: hidden;
`;

const WinTitle = styled.div`
  height: 25px;
  margin: 0 -3px;
  padding: 0 3px 3px 5px;
  display: flex;
  align-items: center;
  gap: 2px;
  background: linear-gradient(#f0f0f2, #ffffff 55%, #e2e2e6);
`;

const WinName = styled.span`
  flex: 1;
  color: #9a9a9a;
  font-size: 10px;
`;

const WinBtn = styled.div`
  width: 18px;
  height: 16px;
  display: flex;
  align-items: center;
  justify-content: center;
  border-radius: 2px;
  border: 1px solid ${(p) => (p.$close ? "#e0a9a9" : "#c5c8cf")};
  background: ${(p) => (p.$close ? "linear-gradient(#eeb4b0, #e28f8a)" : "linear-gradient(#e7e9ee, #c8ccd4)")};
`;

const MinMark = styled.i`
  width: 6px;
  height: 2px;
  margin-top: 6px;
  background: #9a9a9a;
`;

const MaxMark = styled.i`
  width: 10px;
  height: 9px;
  border: 1px solid #a5a5a5;
  border-top-width: 2px;
`;

const ChartSvg = styled.svg`
  display: block;
  width: 522px;
  height: 216px;
  background: #000;
`;

const AxisText = styled.text`
  font-family: ${FONT};
  font-size: 8.3px;
  fill: ${(p) => p.fill || "#e4e4e4"};
  white-space: pre;
`;

const InfoText = styled(AxisText)`
  letter-spacing: -0.12px;
`;

const ChartTabs = styled.div`
  flex: 1;
  display: flex;
  padding-left: 4px;
  margin-right: 3px;
  background: #dcdcdc;
  border-top: 1px solid #555;
`;

const PagerArrows = styled.span`
  margin-left: auto;
  padding-right: 5px;
  align-self: center;
  color: #999;
`;

const Terminal = styled.div`
  flex: 1;
  display: flex;
  padding-top: 3px;
  border-top: 1px solid #c9c9c9;
  margin-top: 1px;
  background: #dedede;
`;

const TerminalSide = styled.div`
  width: 13px;
  flex: none;
  display: flex;
  flex-direction: column;
  align-items: center;
  justify-content: space-between;
  padding: 1px 0 6px;
`;

const VerticalLabel = styled.span`
  writing-mode: vertical-rl;
  transform: rotate(180deg);
  color: #b4b4b4;
  font-size: 9px;
  letter-spacing: 0.4px;
`;

const TerminalMain = styled.div`
  flex: 1;
  display: flex;
  flex-direction: column;
  padding-right: 2px;
`;

const TerminalHead = styled.div`
  height: 17px;
  flex: none;
  display: flex;
  background: #f3f5fa;
  border-bottom: 1px solid #c8c8c8;
`;

const Col = styled.div`
  width: ${(p) => p.$w}px;
  flex: none;
  display: flex;
  align-items: center;
  justify-content: ${(p) => (p.$right ? "flex-end" : "flex-start")};
  padding: 0 5px 0 8px;
  white-space: nowrap;
  border-right: ${(p) => (p.$last ? "0" : "1px solid #cfcfcf")};
  color: #444;
`;

const TerminalBody = styled.div`
  height: 75px;
  flex: none;
  background: #fff;
  border-bottom: 1px solid #555;
`;

const TerminalTabs = styled.div`
  height: 16px;
  flex: none;
  display: flex;
  padding-left: 2px;
  background: #dedede;
`;

const StatusBar = styled.div`
  height: 18px;
  flex: none;
  display: flex;
  align-items: center;
  background: #e0e0e0;
  border-top: 1px solid #c6c6c6;
  font-size: 9.5px;
  color: #333;
`;

const StatusCell = styled.div`
  width: ${(p) => (p.$w ? `${p.$w}px` : "auto")};
  height: 100%;
  flex: none;
  display: flex;
  align-items: center;
  gap: ${(p) => (p.$gap ? 3 : 0)}px;
  padding-left: ${(p) => (p.$line ? 4 : 0)}px;
  padding-top: 3px;
  font-size: ${(p) => (p.$small ? "9px" : "inherit")};
  border-left: ${(p) => (p.$line ? "1px solid #c4c4c4" : "0")};
  white-space: nowrap;
`;

const NoConnection = styled.i`
  width: 20px;
  height: 13px;
  background: repeating-linear-gradient(90deg, #b8352a 0 2px, #f0b0a0 2px 3px);
`;

const Dialog = styled.div`
  position: absolute;
  left: 380px;
  top: 181px;
  width: 468px;
  height: 341px;
  display: flex;
  flex-direction: column;
  background: #dcdcdc;
  border: 2px solid #c9c9cf;
  border-top: 0;
  border-radius: 5px 5px 0 0;
`;

const DialogTitle = styled.div`
  position: relative;
  height: 22px;
  flex: none;
  display: flex;
  align-items: center;
  padding: 0 1px 0 2px;
  margin: 0 -2px;
  border-radius: 5px 5px 0 0;
  background: linear-gradient(#666a7c 0, #a9abb8 25%, #d3d3da 70%, #b8b8c2 100%);
`;

const DialogName = styled.span`
  flex: 1;
  padding-left: 2px;
  font-size: 10.5px;
  font-weight: bold;
  letter-spacing: 0.35px;
  color: #222;
`;

const HelpBtn = styled.div`
  width: 16px;
  height: 16px;
  margin-right: 2px;
  border-radius: 2px;
  background: linear-gradient(#e6e6e6, #8f939f);
  color: #7a5a00;
  font-weight: bold;
  font-size: 12px;
  text-align: center;
  line-height: 16px;
`;

const CloseBtn = styled.div`
  width: 19px;
  height: 17px;
  display: flex;
  align-items: center;
  justify-content: center;
  border-radius: 2px;
  background: linear-gradient(#f2a23a, #d9601c);
  z-index: 1;
`;

const CursorGlow = styled.div`
  position: absolute;
  left: 436px;
  top: 0;
  width: 36px;
  height: 36px;
  border-radius: 50%;
  background: radial-gradient(circle, rgba(255, 224, 0, 0.95) 55%, rgba(255, 224, 0, 0) 72%);
  mix-blend-mode: multiply;
  z-index: 2;
`;

const Cursor = styled.svg`
  position: absolute;
  left: 458px;
  top: 12px;
  z-index: 3;
`;

const DialogHeader = styled.div`
  height: 49px;
  flex: none;
  background: #fff;
  border-bottom: 1px solid #c8c8c8;
  padding: 9px 0 0 18px;
`;

const HeaderTitle = styled.div`
  font-weight: bold;
  font-size: 9.5px;
  color: #222;
  letter-spacing: 0.2px;
`;

const HeaderSub = styled.div`
  margin-top: 2px;
  padding-left: 18px;
  color: #333;
`;

const DialogBody = styled.div`
  flex: 1;
  padding: 17px 0 0 15px;
  border-bottom: 1px solid #c8c8c8;
`;

const ListBox = styled.div`
  width: 435px;
  height: 172px;
  background: #fff;
  border: 1px solid #aeb4c0;
`;

const COLS = "151px 216px 66px";

const ListHead = styled.div`
  display: grid;
  grid-template-columns: ${COLS};
  height: 17px;
  background: linear-gradient(#ffffff, #f1f1f1);
`;

const ListHeadCell = styled.div`
  display: flex;
  align-items: center;
  justify-content: ${(p) => (p.$right ? "flex-end" : "flex-start")};
  padding-left: ${(p) => p.$pad || 0}px;
  padding-right: ${(p) => (p.$right ? 5 : 0)}px;
  border-right: ${(p) => (p.$right ? "0" : "1px solid #ddd")};
  color: #444;
`;

const ListRow = styled.div`
  display: grid;
  grid-template-columns: ${COLS};
  height: 17px;
  background: ${(p) => (p.$selected ? "#b9b9bf" : "#f3f3f3")};
  border-bottom: 1px solid #fff;
  color: #3a3a3a;
`;

const ListCell = styled.div`
  display: flex;
  align-items: center;
  gap: ${(p) => (p.$gap ? 4 : 0)}px;
  justify-content: ${(p) => (p.$right ? "flex-end" : "flex-start")};
  padding-left: ${(p) => (p.$gap ? 3 : p.$pad || 0)}px;
  padding-right: ${(p) => (p.$right ? 3 : 0)}px;
  border-right: ${(p) => (p.$right ? "0" : "1px solid #fff")};
  white-space: nowrap;
`;

const AddRow = styled.div`
  display: flex;
  align-items: center;
  gap: 5px;
  height: 17px;
  padding-left: 3px;
  color: #666;
`;

const SearchRow = styled.div`
  display: flex;
  align-items: center;
  gap: 7px;
  margin-top: 9px;
`;

const Progress = styled.div`
  width: 333px;
  height: 14px;
  border: 1px solid #666;
  border-radius: 3px;
  padding: 2px 9px 2px 2px;
  background: #f4f4f4;
  &::before {
    content: "";
    display: block;
    height: 100%;
    background: repeating-linear-gradient(90deg, #7ba97b 0 5.5px, #dcebdc 5.5px 6.9px);
  }
`;

const DisabledBtn = styled.div`
  width: 95px;
  height: 17px;
  display: flex;
  align-items: center;
  justify-content: center;
  background: #e2e2e2;
  border: 1px solid #d4d4d4;
  border-radius: 3px;
  color: #a8a8a8;
`;

const DialogFooter = styled.div`
  height: 39px;
  flex: none;
  display: flex;
  align-items: flex-start;
  justify-content: flex-end;
  gap: 10px;
  padding: 12px 9px 0 0;
`;

const DialogBtn = styled.div`
  width: 62px;
  height: 18px;
  display: flex;
  align-items: center;
  justify-content: center;
  border-radius: 3px;
  border: 1px solid ${(p) => (p.$default ? "#2c5384" : "#3e5a80")};
  background: linear-gradient(#ffffff, #f0f0f3 60%, #cfd0dc);
  color: #222;
`;
